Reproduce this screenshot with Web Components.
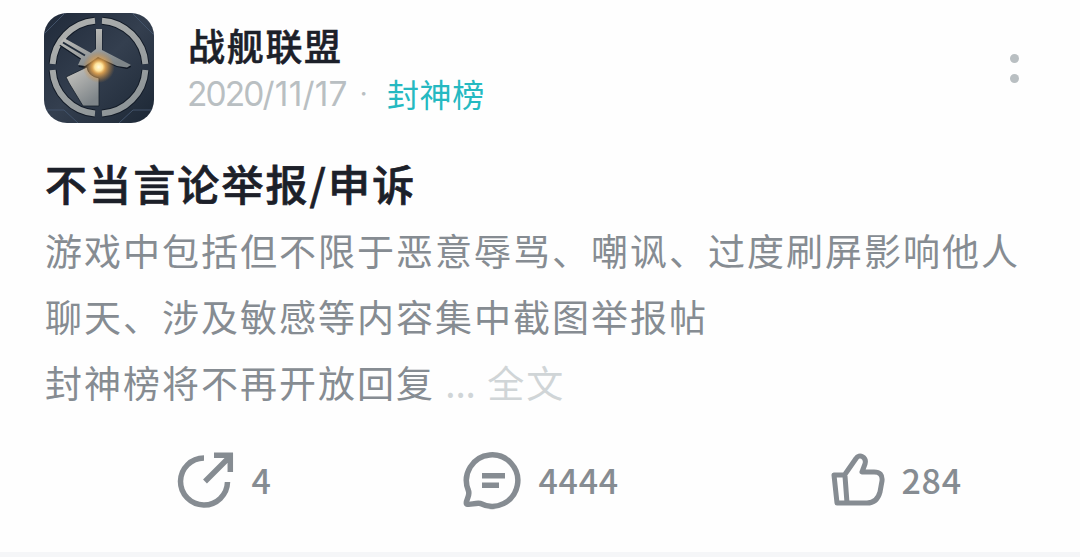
<!DOCTYPE html>
<html lang="zh-CN">
<head>
<meta charset="utf-8">
<title>战舰联盟</title>
<style>
html,body{margin:0;height:557px;overflow:hidden;background:#fefefe}
body{font-family:"Noto Sans CJK SC",sans-serif}
</style>
</head>
<body>
<post-card></post-card>
<script>
const define=(name,html)=>customElements.define(name,class extends HTMLElement{
  constructor(){super();this.attachShadow({mode:'open'}).innerHTML=html;}
});
define('game-avatar',`<style>:host{display:block;width:110px;height:110px}svg{display:block}</style>
<svg width="110" height="110" viewBox="0 0 110 110">
<defs>
<linearGradient id="bg" x1="0" y1="0" x2="1" y2="1"><stop offset="0" stop-color="#202a3a"/><stop offset=".5" stop-color="#343f4f"/><stop offset="1" stop-color="#1c2735"/></linearGradient>
<linearGradient id="m" x1="0" y1="0" x2=".6" y2="1"><stop offset="0" stop-color="#c9c8c3"/><stop offset=".5" stop-color="#a5a7a6"/><stop offset="1" stop-color="#7e8589"/></linearGradient>
<linearGradient id="r" gradientUnits="userSpaceOnUse" x1="0" y1="0" x2="60" y2="110"><stop offset="0" stop-color="#b4b5b3"/><stop offset="1" stop-color="#8d9497"/></linearGradient>
<radialGradient id="g"><stop offset="0" stop-color="#fffce0"/><stop offset=".25" stop-color="#ffe39a"/><stop offset=".42" stop-color="#f1ad51" stop-opacity=".85"/><stop offset="1" stop-color="#c98535" stop-opacity="0"/></radialGradient>
<clipPath id="c"><rect width="110" height="110" rx="23"/></clipPath>
</defs>
<g clip-path="url(#c)">
<rect width="110" height="110" fill="url(#bg)"/>
<path d="M0 21L21 0M88 0L110 22M0 97H20L34 110M110 97H89L75 110" stroke="#42536a" stroke-width="1" fill="none"/>
<g fill="none">
<path d="M8.6 51A46.5 46.5 0 0 1 51 7.7M58 7.7A46.5 46.5 0 0 1 101.4 51M101.4 57A46.5 46.5 0 0 1 58 100.5M51 100.5A46.5 46.5 0 0 1 8.6 57" stroke="#131b27" stroke-width="8"/>
<path d="M8.6 51A46.5 46.5 0 0 1 51 7.7M58 7.7A46.5 46.5 0 0 1 101.4 51M101.4 57A46.5 46.5 0 0 1 58 100.5M51 100.5A46.5 46.5 0 0 1 8.6 57" stroke="url(#r)" stroke-width="6"/>
</g>
<path d="M20 26L16 31L37 45L35 52L41 53L54 44L73 52L83 54L87 52L58 37V16H52V36L47 41Z" fill="#101824" transform="translate(0 1.500)" stroke="#101824" stroke-width="1"/>
<path d="M20 25L15 31L37 45.500L34 52L41 53L54 44L73 53L83 54.500L87 52L58 37V16H52V36L47 40Z" fill="url(#m)"/>
<path d="M19 29.500L41 42.500" stroke="#202b39" stroke-width="2"/>
<path d="M22 64L43 54Q44 63 55 65V93H39L25 70Z" fill="url(#m)" stroke="#151e29" stroke-width=".8"/>
<circle cx="54.700" cy="54" r="16" fill="url(#g)"/>
</g></svg>`);
define('more-button',`<style>:host{display:flex;flex-direction:column;gap:10.5px;width:9px}i{width:9px;height:9px;border-radius:50%;background:#b9bfc2}</style><i></i><i></i>`);
define('post-header',`<style>
:host{display:flex;height:110px}
.id{margin-left:34px;flex:1;white-space:nowrap}
.name{font-size:37px;font-weight:500;-webkit-text-stroke:.5px;letter-spacing:1.7px;line-height:52px;height:52px;margin-top:6px;color:#1c2029}
.meta{display:flex;height:44px;line-height:44px}
.date{font:400 33.5px/44px Inter,sans-serif;letter-spacing:.2px;color:#b9bfc2;width:170px;margin-left:-1px;padding-top:1px}
.year{letter-spacing:-1.9px}
.dot{font:32px/44px Inter,sans-serif;color:#b9bfc2;width:30px;padding-top:1px;box-sizing:border-box}
.dot b{display:inline-block;transform:scale(.85);font-weight:400;margin-left:2px}
.tag{font-size:32px;letter-spacing:.6px;color:#25b9c1}
more-button{margin:41px 61px 0 0}
</style><game-avatar></game-avatar><div class="id"><div class="name">战舰联盟</div><div class="meta"><span class="date"><span class="year">2020</span>/11/17</span><span class="dot"><b>·</b></span><span class="tag">封神榜</span></div></div><more-button></more-button>`);
define('post-body',`<style>
:host{display:block;white-space:nowrap}
h1{margin:0;font-size:42px;font-weight:500;-webkit-text-stroke:.7px;letter-spacing:2.1px;line-height:60px;height:64px;color:#1c2029}
p{margin:0;font-size:37px;letter-spacing:2px;line-height:66px;color:#868c92}
span{color:#d0d5d7}.dots{letter-spacing:-.2px;margin-right:3.5px}
</style><h1>不当言论举报/申诉</h1><p>游戏中包括但不限于恶意辱骂、嘲讽、过度刷屏影响他人<br>聊天、涉及敏感等内容集中截图举报帖<br>封神榜将不再开放回复 <span><span class="dots">... </span>全文</span></p>`);
define('post-action',`<style>:host{display:flex;align-items:center;height:60px;font-size:34px;font-weight:500;letter-spacing:.7px;line-height:60px;color:#868c92}</style><slot name="icon"></slot><slot></slot>`);
define('action-bar',`<style>
:host{display:grid;grid-template-columns:285px 369px 1fr;height:60px}
svg{display:block;margin-right:16.5px;fill:none;stroke:#868c92;stroke-width:5.5}
</style>
<post-action><svg slot="icon" width="58" height="60" viewBox="0 0 58 60"><path d="M27 8A23.500 23.500 0 1 0 50.500 32M28 31.500L53 6.500M37 5.300H53.300V22" /></svg>4</post-action>
<post-action><svg slot="icon" width="60" height="60" viewBox="0 0 60 60"><path d="M6.200 40A25.700 25.700 0 1 1 18.500 53.500C13 52.500 8 55.500 4.500 54C3 50.500 9 46 6.200 40Z" stroke-linejoin="round"/><path d="M20 25.700H43M20 35.200H37"/></svg>4444</post-action>
<post-action><svg slot="icon" width="54" height="60" viewBox="0 0 54 60"><path d="M3 25H13.500L25 8.500C28 3 36 7 34 14L31 22H43Q52 22 51 31L49 42Q46 53 36 53H6ZM14 26L16 53" stroke-linejoin="round" stroke-width="5"/></svg>284</post-action>`);
define('post-card',`<style>
:host{display:flex;flex-direction:column;box-sizing:border-box;height:557px;padding-top:13px;background:#fefefe}
post-header{margin-left:44px}
post-body{margin:30px 0 0 45px}
action-bar{margin:35px 0 0 177px}
footer{margin-top:auto;height:5px;background:#f5f6f8}
</style><post-header></post-header><post-body></post-body><action-bar></action-bar><footer></footer>`);
</script>
</body>
</html>
